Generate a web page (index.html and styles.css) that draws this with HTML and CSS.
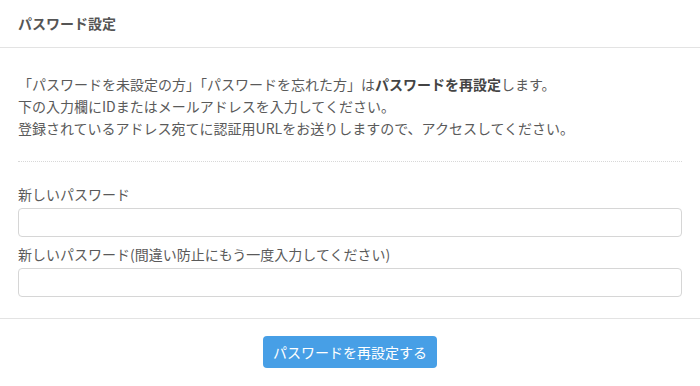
FILE: index.html
```html
<!DOCTYPE html>
<html lang="ja">
<head>
    <meta charset="UTF-8">
    <meta name="viewport" content="width=device-width, initial-scale=1.0">
    <title>パスワード設定</title>
    <link rel="stylesheet" href="styles.css">
</head>
<body>
    <div class="panel">
        <div class="panel-heading">パスワード設定</div>

        <div class="panel-body">
            <p class="lead">
                「パスワードを未設定の方」「パスワードを忘れた方」は<strong>パスワードを再設定</strong>します。<br>
                下の入力欄にIDまたはメールアドレスを入力してください。<br>
                登録されているアドレス宛てに認証用URLをお送りしますので、アクセスしてください。
            </p>

            <form class="pw-form" onsubmit="event.preventDefault();">
                <div class="form-group">
                    <label for="pw1">新しいパスワード</label>
                    <input type="password" id="pw1" class="form-control">
                </div>
                <div class="form-group">
                    <label for="pw2">新しいパスワード(間違い防止にもう一度入力してください)</label>
                    <input type="password" id="pw2" class="form-control">
                </div>
            </form>
        </div>

        <div class="panel-footer">
            <button type="button" class="btn-primary">パスワードを再設定する</button>
        </div>
    </div>
</body>
</html>
```

FILE: styles.css
```css
body {
    margin: 0;
    font-family: "Noto Sans CJK JP", "Noto Sans", sans-serif;
    font-size: 14px;
    color: #5a5a5a;
    background-color: #fff;
}

.panel {
    width: 700px;
}

.panel-heading {
    padding: 12px 18px 13px;
    line-height: 22px;
    font-weight: bold;
    color: #555;
    border-bottom: 1px solid #e3e3e3;
}

.panel-body {
    padding: 0 18px 21px;
}

.lead {
    margin: 25px 0 0;
    padding-bottom: 22px;
    line-height: 22px;
    border-bottom: 1px dotted #d8d8d8;
}

.lead strong {
    color: #444;
}

.pw-form {
    padding-top: 21px;
}

.form-group {
    margin-bottom: 6px;
}

.form-group:last-child {
    margin-bottom: 0;
}

.form-group label {
    display: block;
    line-height: 22px;
    margin-bottom: 3px;
}

.form-control {
    display: block;
    box-sizing: border-box;
    width: 100%;
    height: 29px;
    padding: 4px 8px;
    border: 1px solid #d6d6d6;
    border-radius: 4px;
    background: #fff;
    font-family: inherit;
    font-size: 14px;
}

.panel-footer {
    border-top: 1px solid #e3e3e3;
    padding: 17px 0;
    text-align: center;
}

.btn-primary {
    height: 32px;
    padding: 0 10px;
    border: none;
    border-radius: 4px;
    background-color: #479fe6;
    color: #fff;
    font-family: inherit;
    font-size: 14px;
    white-space: nowrap;
    cursor: pointer;
}
```
